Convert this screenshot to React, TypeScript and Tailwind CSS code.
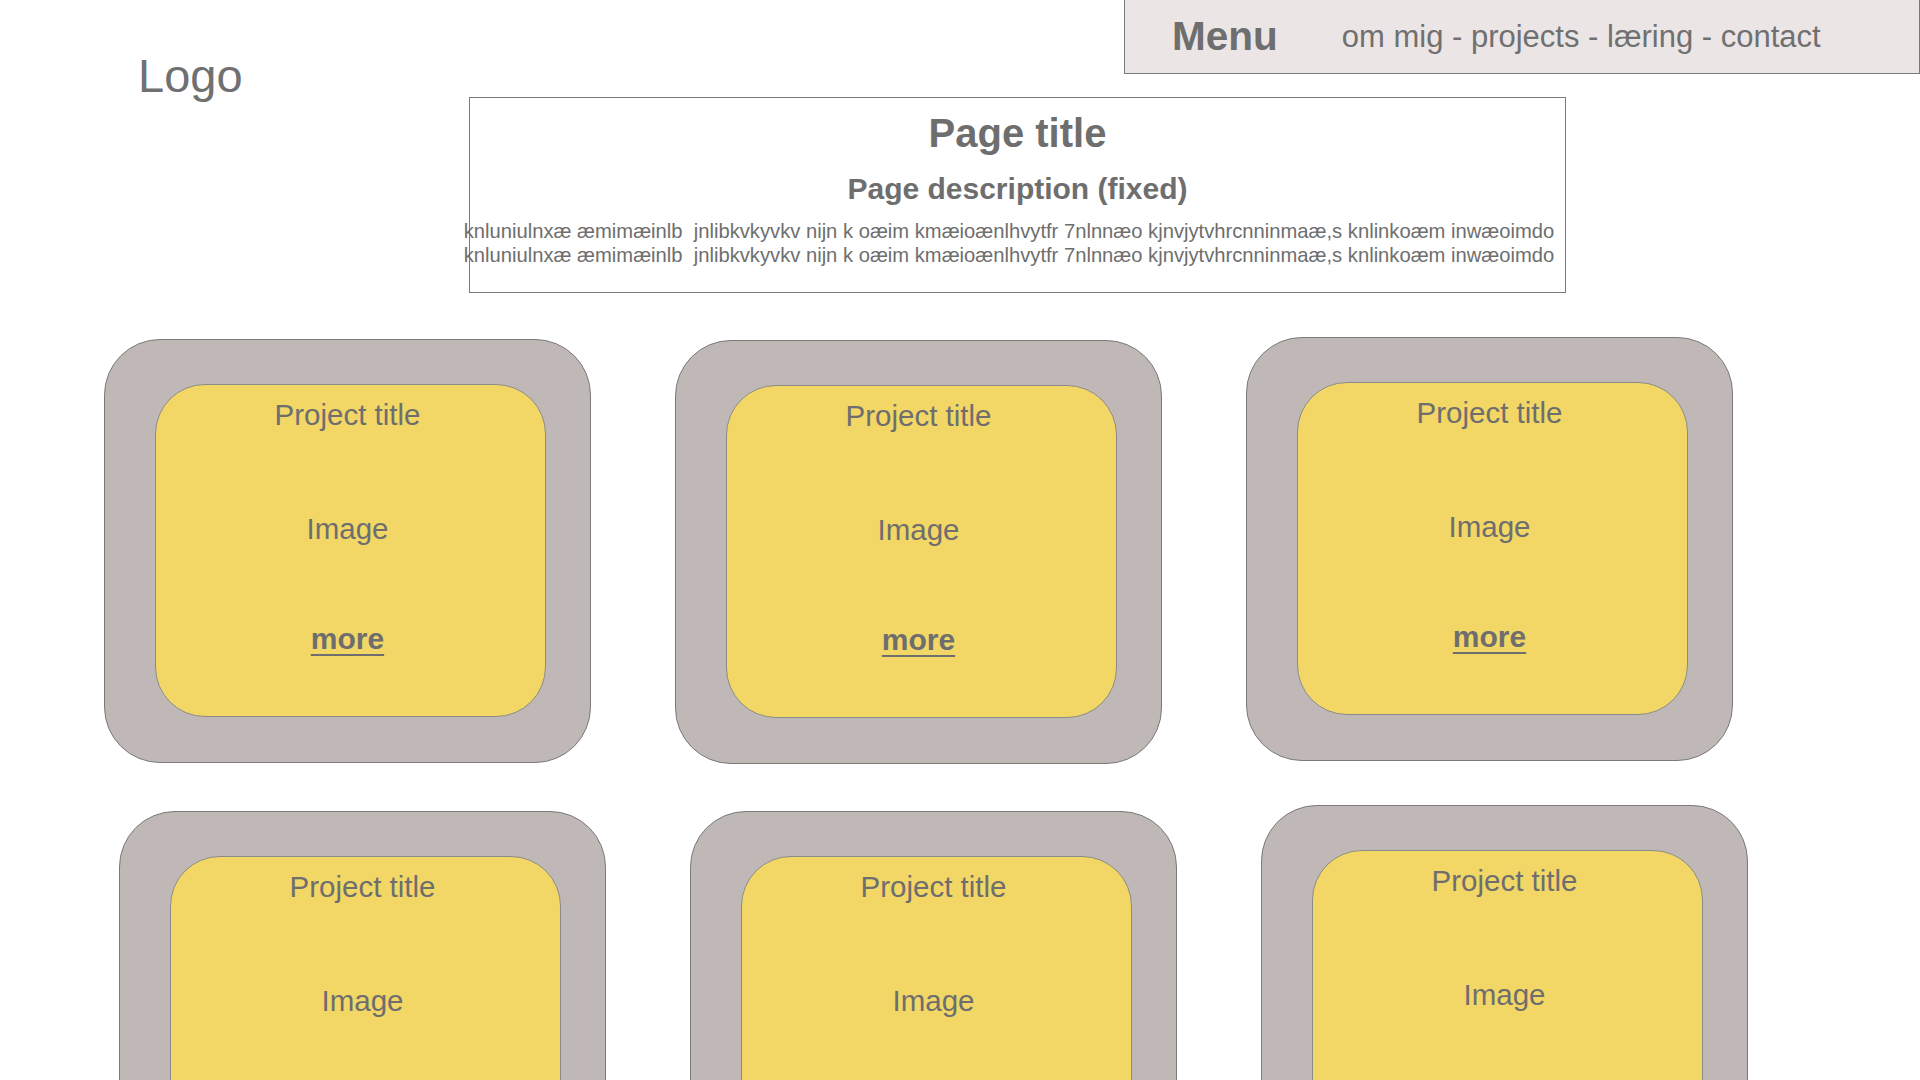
import React from "react";

function Card({ more = true, mt }: { more?: boolean; mt: string }) {
  return (
    <div className={`w-[487px] h-[424px] shrink-0 rounded-[56px] border border-[#7a7a7a] bg-[#c0b8b6] pl-[50px] pt-[44px] ${mt}`}>
      <div className="w-[391px] h-[333px] rounded-[50px] border border-[#8a8a8a] bg-[#f2d766] flex flex-col items-center pt-[15px] pr-[6px] text-[#6e6e6e]">
        <div className="text-[29.5px] leading-[29px]">Project title</div>
        <div className="text-[29.5px] leading-[29px] mt-[85px]">Image</div>
        {more && (
          <div className="text-[30px] leading-[30px] font-bold underline underline-offset-[5px] decoration-[2px] mt-[81px]">more</div>
        )}
      </div>
    </div>
  );
}

export default function App() {
  const line =
    "knluniulnxæ æmimæinlb\u00a0\u00a0jnlibkvkyvkv nijn k oæim kmæioænlhvytfr 7nlnnæo kjnvjytvhrcnninmaæ,s knlinkoæm inwæoimdo";
  return (
    <div className="w-[1920px] h-[1080px] overflow-hidden bg-white font-['Liberation_Sans',Arial,sans-serif] text-[#6e6e6e]">
      <div className="flex h-[74px]">
        <div className="w-[1124px] pl-[138px] pt-[50px]">
          <div className="text-[47px] leading-[52px] text-[#707070]">Logo</div>
        </div>
        <div className="flex-1 h-[74px] bg-[#ebe5e5] border-l border-b border-r border-[#7a7a7a] flex items-center pl-[47px]">
          <div className="text-[40.5px] font-bold text-[#6e6e6e] leading-none">Menu</div>
          <div className="ml-[64px] text-[31px] leading-none text-[#707070]">om mig - projects - læring - contact</div>
        </div>
      </div>

      <div className="ml-[469px] mt-[23px] w-[1097px] h-[196px] border border-[#7a7a7a] flex flex-col items-center pt-[15px]">
        <div className="text-[40px] leading-[40px] font-bold">Page title</div>
        <div className="text-[30px] leading-[30px] font-bold mt-[21px]">Page description (fixed)</div>
        <div className="mt-[15px] mr-[17px] flex flex-col items-center text-[20.2px] leading-[24px] whitespace-nowrap">
          <div>{line}</div>
          <div>{line}</div>
        </div>
      </div>

      <div className="flex items-start gap-[84px] ml-[104px] mt-[44px]">
        <Card mt="mt-[2px]" />
        <Card mt="mt-[3px]" />
        <Card mt="mt-0" />
      </div>
      <div className="flex items-start gap-[84px] ml-[119px] mt-[41px]">
        <Card mt="mt-[6px]" more={false} />
        <Card mt="mt-[6px]" more={false} />
        <Card mt="mt-0" more={false} />
      </div>
    </div>
  );
}
